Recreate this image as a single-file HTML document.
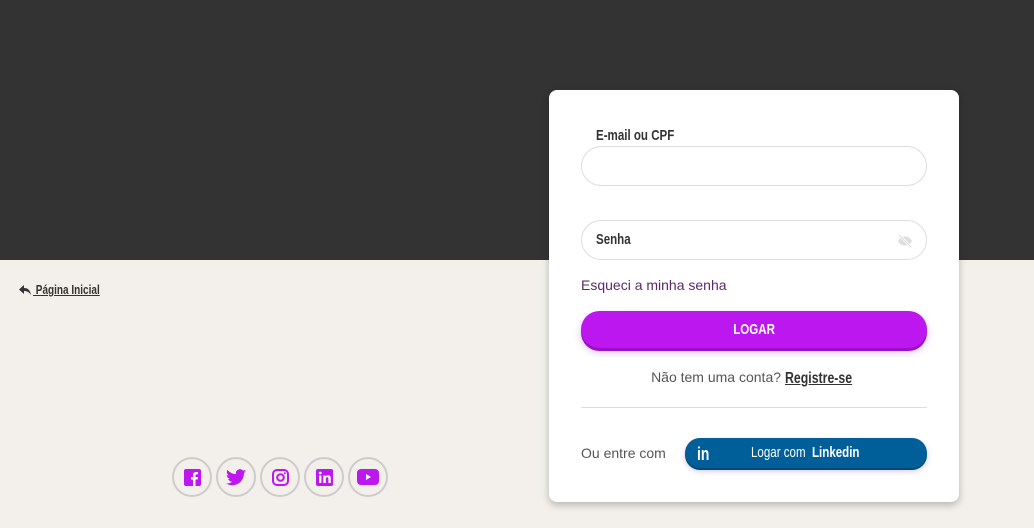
<!DOCTYPE html>
<html><head><meta charset="utf-8"><style>
*{box-sizing:border-box;margin:0;padding:0}
body{width:1034px;height:528px;overflow:hidden;background:#f3f0eb;font-family:"Liberation Sans",sans-serif;position:relative}
.top{position:absolute;left:0;top:0;width:1034px;height:260px;background:#333}
.cond{font-family:"Liberation Sans",sans-serif;font-weight:bold;display:inline-block;transform:scaleX(.77);transform-origin:left center;white-space:nowrap}
.ctr{transform-origin:center center}
.back{position:absolute;left:18px;top:282px;font-size:13px;color:#333;display:flex;align-items:center;gap:1px}
.social{position:absolute;top:457px;left:172px;display:flex;gap:4px}
.social div{width:40px;height:40px;border:2px solid #ccc;border-radius:50%;display:flex;align-items:center;justify-content:center}
.card{position:absolute;left:549px;top:90px;width:410px;height:412px;background:#fff;border-radius:8px;box-shadow:0 3px 8px rgba(0,0,0,.25)}
.lbl{position:absolute;left:47px;top:37px;font-size:15px;color:#333}
.inp{position:absolute;left:32px;width:346px;height:40px;border:1px solid #ddd;border-radius:20px}
.forgot{position:absolute;left:32px;top:187px;font-size:14px;color:#5a2a6a}
.btn{position:absolute;left:32px;top:221px;width:346px;height:37px;border-radius:19px;background:#bb17ee;box-shadow:0 3px 0 #9a10c4,0 4px 8px rgba(120,40,180,.3);color:#fff;font-size:15px;display:flex;align-items:center;justify-content:center}
.reg{position:absolute;left:0;width:410px;top:279px;text-align:center;font-size:14px;color:#555}
.hr{position:absolute;left:32px;top:317px;width:346px;height:1px;background:#ddd}
.ou{position:absolute;left:32px;top:355px;font-size:14px;color:#555}
.li{position:absolute;left:136px;top:348px;width:242px;height:30px;border-radius:15px;background:#005f99;box-shadow:0 2px 0 #004a78,0 3px 6px rgba(100,60,160,.3);color:#fff;font-size:15px}
</style></head><body>
<div class="top"></div>
<div class="back"><svg width="14" height="12" viewBox="0 0 14 12"><path d="M6 1 L1 5.5 L6 10 V7 C9 7 11 8 13 11 C12 6 10 4 6 4 Z" fill="#333"/></svg><span class="cond" style="text-decoration:underline">&nbsp;Página Inicial</span></div>
<div class="social">
<div><svg width="17" height="17" viewBox="0 0 17 17"><rect width="17" height="17" rx="2" fill="#bb17ee"/><path d="M11.5 17V10.5H13.6L14 8H11.5V6.5C11.5 5.8 11.8 5.3 12.8 5.3H14V3.1C13.6 3 12.9 3 12.1 3C10.3 3 9 4.1 9 6.1V8H7V10.5H9V17Z" fill="#fff"/></svg></div>
<div><svg width="20" height="17" viewBox="0 0 24 20"><path d="M24 2.4c-.9.4-1.8.6-2.8.8 1-.6 1.8-1.6 2.2-2.7-1 .6-2 1-3.1 1.2A4.9 4.9 0 0 0 11.9 6C7.8 5.8 4.2 3.9 1.7.9c-1.4 2.3-.6 5.1 1.5 6.5-.8 0-1.6-.2-2.2-.6 0 2.4 1.7 4.4 3.900 4.800-.7.2-1.500.2-2.200.1.600 2 2.400 3.400 4.600 3.400A9.900 9.900 0 0 1 0 17.100 14 14 0 0 0 7.500 19.300c9.100 0 14.300-7.700 14-14.600 1-.7 1.800-1.500 2.500-2.300z" fill="#bb17ee"/></svg></div>
<div><svg width="17" height="17" viewBox="0 0 17 17"><rect x="1" y="1" width="15" height="15" rx="4" fill="none" stroke="#bb17ee" stroke-width="2"/><circle cx="8.5" cy="8.5" r="3.3" fill="none" stroke="#bb17ee" stroke-width="2"/><circle cx="12.8" cy="4.2" r="1" fill="#bb17ee"/></svg></div>
<div><svg width="17" height="17" viewBox="0 0 17 17"><rect width="17" height="17" rx="2" fill="#bb17ee"/><rect x="3" y="6.5" width="2.4" height="7.5" fill="#fff"/><circle cx="4.2" cy="4" r="1.4" fill="#fff"/><path d="M7.3 6.5h2.3v1.1c.4-.7 1.300-1.300 2.500-1.300 2.300 0 2.700 1.500 2.700 3.400V14h-2.400v-3.700c0-.9 0-2-1.200-2s-1.400.9-1.400 1.900V14H7.300z" fill="#fff"/></svg></div>
<div><svg width="22" height="16" viewBox="0 0 22 16"><rect width="22" height="16" rx="4" fill="#bb17ee"/><path d="M9 5v6l5-3z" fill="#fff"/></svg></div>
</div>
<div class="card">
<div class="lbl"><span class="cond">E-mail ou CPF</span></div>
<div class="inp" style="top:56px"></div>
<div class="inp" style="top:130px"><span class="cond" style="position:absolute;left:14px;top:10px;font-size:15px;color:#333">Senha</span>
<svg style="position:absolute;right:13px;top:13px" width="16" height="14" viewBox="0 0 16 14"><path d="M1 7C3 3.5 5.500 2.500 8 2.500S13 3.5 15 7C13 10.5 10.500 11.500 8 11.500S3 10.5 1 7Z" fill="#ddd"/><path d="M2 1 L14 13" stroke="#fff" stroke-width="2.4"/><path d="M2 1 L14 13" stroke="#ddd" stroke-width="1.2"/></svg></div>
<div class="forgot">Esqueci a minha senha</div>
<div class="btn"><span class="cond ctr">LOGAR</span></div>
<div class="reg">Não tem uma conta? <b class="cond" style="font-size:16px;color:#333;text-decoration:underline;width:72px;text-align:left;vertical-align:-1px">Registre-se</b></div>
<div class="hr"></div>
<div class="ou">Ou entre com</div>
<div class="li"><span class="cond" style="position:absolute;left:12px;top:6px;font-size:18px">in</span><span class="cond" style="position:absolute;left:66px;top:6px"><span style="font-weight:normal">Logar com&nbsp;&nbsp;</span>Linkedin</span></div>
</div>
</body></html>
